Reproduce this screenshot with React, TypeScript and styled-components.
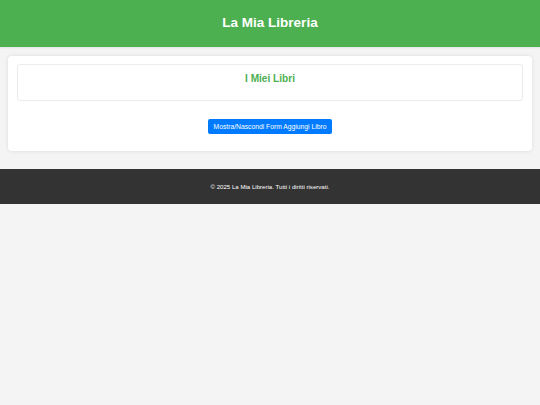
import React from "react";
import styled, { createGlobalStyle } from "styled-components";

const GlobalStyle = createGlobalStyle`
  * { box-sizing: border-box; }
  html, body { margin: 0; padding: 0; }
  body {
    background: #f4f4f4;
    font-family: "Liberation Sans", Arial, Helvetica, sans-serif;
    font-size: 6.75px;
    color: #333;
  }
`;

const Header = styled.header`
  background: #4caf50;
  color: #fff;
  height: 47px;
  display: flex;
  align-items: center;
  justify-content: center;
  box-shadow: 0 1px 2px rgba(0, 0, 0, 0.08);
`;

const SiteTitle = styled.h1`
  margin: 0;
  font-size: 13.5px;
  font-weight: bold;
  line-height: 1;
  padding-bottom: 1px;
`;

const Main = styled.main`
  padding: 9px 8px 17px 8px;
`;

const Card = styled.section`
  background: #fff;
  border-radius: 4px;
  box-shadow: 0 0 4px rgba(0, 0, 0, 0.1);
  padding: 8px 9px 17px 9px;
  display: flex;
  flex-direction: column;
  align-items: center;
  gap: 18px;
`;

const BookList = styled.div`
  align-self: stretch;
  height: 37px;
  border: 1px solid #ececec;
  border-radius: 3px;
  box-shadow: 0 0 1px rgba(0, 0, 0, 0.06);
  padding-top: 8px;
  text-align: center;
`;

const SectionTitle = styled.h2`
  margin: 0;
  font-size: 10.1px;
  line-height: 12px;
  font-weight: bold;
  color: #4caf50;
`;

const ToggleButton = styled.button`
  background: #007bff;
  color: #fff;
  border: none;
  border-radius: 2px;
  height: 15px;
  padding: 0 6px;
  font-family: inherit;
  font-size: 6.75px;
  line-height: 15px;
  cursor: pointer;
`;

const Footer = styled.footer`
  background: #333;
  color: #fff;
  height: 35px;
  margin-top: 1px;
  display: flex;
  align-items: center;
  justify-content: center;
  font-size: 6.1px;
`;

export default function App() {
  return (
    <>
      <GlobalStyle />
      <Header>
        <SiteTitle>La Mia Libreria</SiteTitle>
      </Header>
      <Main>
        <Card>
          <BookList>
            <SectionTitle>I Miei Libri</SectionTitle>
          </BookList>
          <ToggleButton>Mostra/Nascondi Form Aggiungi Libro</ToggleButton>
        </Card>
      </Main>
      <Footer>© 2025 La Mia Libreria. Tutti i diritti riservati.</Footer>
    </>
  );
}
